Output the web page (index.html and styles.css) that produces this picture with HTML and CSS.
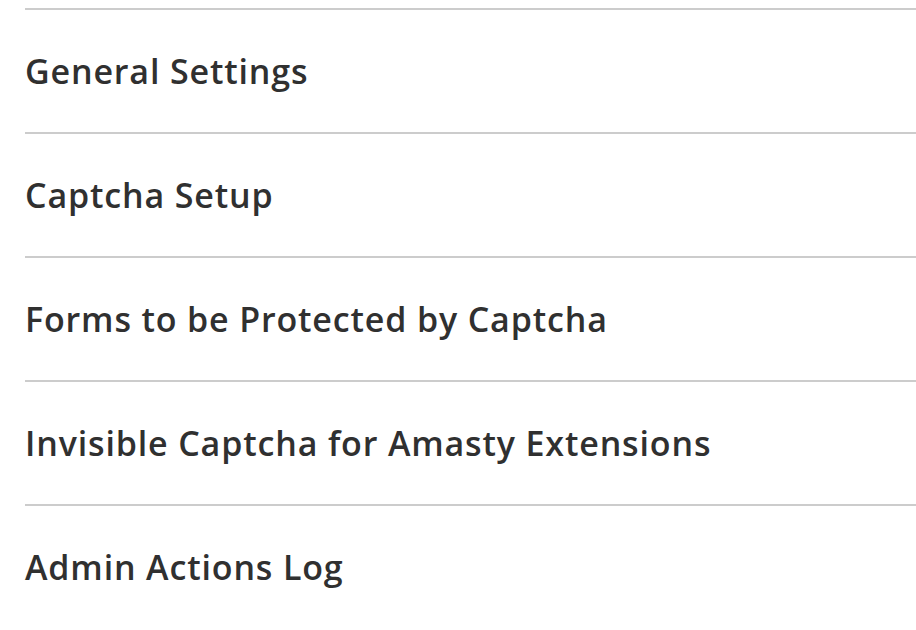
FILE: index.html
```html
<!DOCTYPE html>
<html>
<head>
<meta charset="utf-8">
<link rel="stylesheet" href="styles.css">
</head>
<body>
<div class="sections">
  <div class="section"><span class="title">General Settings</span></div>
  <div class="section"><span class="title">Captcha Setup</span></div>
  <div class="section"><span class="title">Forms to be Protected by Captcha</span></div>
  <div class="section"><span class="title">Invisible Captcha for Amasty Extensions</span></div>
  <div class="section"><span class="title">Admin Actions Log</span></div>
</div>
</body>
</html>
```
FILE: styles.css
```css
html, body {
  margin: 0;
  padding: 0;
  background: #ffffff;
}
.sections {
  padding: 8px 0 0 25px;
  font-family: "Open Sans", sans-serif;
}
.section {
  border-top: 2px solid #cccccc;
  height: 122px;
  display: flex;
  align-items: center;
}
.title {
  font-size: 34px;
  font-weight: 600;
  color: #303030;
  line-height: 1;
  letter-spacing: 0.025em;
}
```
